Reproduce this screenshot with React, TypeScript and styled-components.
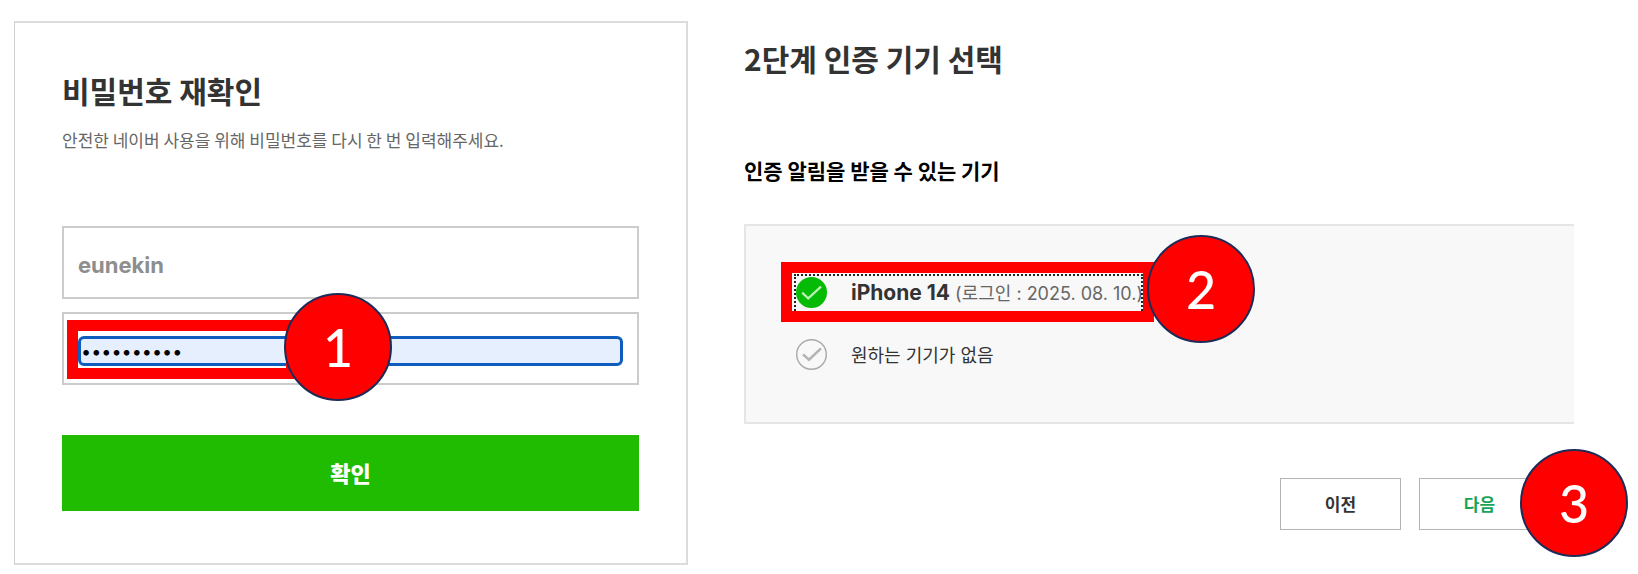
import React, { useState } from "react";
import styled, { createGlobalStyle } from "styled-components";

const GlobalStyle = createGlobalStyle`
  *, *::before, *::after { box-sizing: border-box; }
  body { margin: 0; background: #fff; }
  body, input, button { font-family: Inter, "Noto Sans CJK KR", sans-serif; }
`;

const koreanFirst = `font-family: "Noto Sans CJK KR", Inter, sans-serif;`;

const Page = styled.main`
  display: grid;
  grid-template-columns: minmax(0, 674fr) minmax(0, 830fr);
  align-items: start;
  gap: 56px;
  padding: 21px 64px 7px 14px;
`;

const PasswordCard = styled.form`
  display: flex;
  flex-direction: column;
  padding: 49px 47px 52px;
  border: 2px solid #dcdcdc;
  border-left: 1px solid #d0d0d0;
`;

const DeviceSection = styled.form`
  display: flex;
  flex-direction: column;
  padding-top: 19px;
`;

const Title = styled.h1`
  ${koreanFirst}
  margin: 0;
  font-size: 30px;
  line-height: 36px;
  font-weight: 700;
  color: #333;
`;

const Description = styled.p`
  ${koreanFirst}
  margin: 20px 0 74px;
  font-size: 17px;
  line-height: 24px;
  color: #666;
`;

const Field = styled.div`
  position: relative;
  display: flex;
  align-items: center;
  height: 73px;
  padding: 0 14px;
  border: 2px solid #ccc;

  & + & {
    margin-top: 13px;
  }
`;

const UserInput = styled.input`
  width: 100%;
  padding: 4px 0 0;
  border: 0;
  background: none;
  font-size: 22px;
  line-height: 28px;
  font-weight: 700;
  color: #8e8e8e;
`;

const PasswordInput = styled.input`
  width: 100%;
  height: 30px;
  margin-top: 5px;
  padding: 0;
  border: 3px solid #0f5cbf;
  border-radius: 6px;
  outline: 0;
  background: #e6effd;
  font-size: 18px;
  color: #000;
`;

const ConfirmButton = styled.button`
  height: 76px;
  margin-top: 50px;
  padding: 0 0 2px;
  border: 0;
  background: #1fbc02;
  font-size: 22px;
  font-weight: 800;
  color: #fff;
`;

const SubTitle = styled.h2`
  ${koreanFirst}
  margin: 80px 0 40px;
  font-size: 21px;
  line-height: 28px;
  font-weight: 700;
  color: #000;
`;

const DeviceBox = styled.div`
  display: flex;
  flex-direction: column;
  align-items: flex-start;
  gap: 24px;
  padding: 47px 0 49px 46px;
  border: 2px solid #e5e5e5;
  border-right: 0;
  background: #f8f8f8;
`;

const Option = styled.label<{ $focused?: boolean }>`
  position: relative;
  display: flex;
  align-items: center;
  gap: 24px;
  height: 38px;
  padding: 0 0 0 4px;
  white-space: nowrap;
  font-size: 18px;
  color: #333;

  &::before {
    content: "";
    display: ${(p) => (p.$focused ? "block" : "none")};
    position: absolute;
    inset: 1px 0 0 2px;
    border: 2px dotted #222;
    border-bottom: 0;
  }
`;

const HiddenRadio = styled.input`
  position: absolute;
  opacity: 0;
  width: 31px;
  height: 31px;
  margin: 0;
`;

const DeviceName = styled.span`
  display: flex;
  align-items: baseline;
  gap: 5px;
`;

const Strong = styled.strong`
  font-size: 21px;
  font-weight: 700;
`;

const Muted = styled.span`
  font-size: 18px;
  color: #666;
`;

const Actions = styled.div`
  display: flex;
  justify-content: flex-end;
  gap: 18px;
  margin-top: 54px;
  padding-right: 34px;
`;

const ActionButton = styled.button<{ $primary?: boolean }>`
  position: relative;
  width: 121px;
  height: 52px;
  padding: 0 0 2px;
  border: 1px solid #b4b4b4;
  background: #fff;
  font-size: 17px;
  font-weight: 700;
  color: ${(p) => (p.$primary ? "#17a457" : "#333")};
`;

const Frame = styled.span<{ $inset: string; $width?: string }>`
  position: absolute;
  z-index: 1;
  inset: ${(p) => p.$inset};
  width: ${(p) => p.$width ?? "auto"};
  border: 11px solid #f00;
  pointer-events: none;
`;

const StepBadge = styled.span<{ $top: string; $left: string }>`
  position: absolute;
  z-index: 2;
  top: ${(p) => p.$top};
  left: ${(p) => p.$left};
  display: flex;
  align-items: center;
  justify-content: center;
  width: 108px;
  height: 108px;
  border: 2px solid #1d2b57;
  border-radius: 50%;
  background: #f00;
  font-family: Lato, sans-serif;
  font-size: 52px;
  line-height: 60px;
  font-weight: 500;
  color: #fff;
  pointer-events: none;
`;

function CheckIcon({ checked }: { checked: boolean }) {
  return (
    <svg width="31" height="31" viewBox="0 0 31 31" fill="none" aria-hidden="true">
      <circle
        cx="15.5"
        cy="15.5"
        r="14.8"
        fill={checked ? "#06bb06" : "#f8f8f8"}
        stroke={checked ? "#06bb06" : "#a8a8a8"}
        strokeWidth="1.4"
      />
      <path
        d={checked ? "M6.2 15.6 L12.2 21.4 L25 9.6" : "M7 15.4 L13 20.8 L25 9.4"}
        stroke={checked ? "#b9f0b4" : "#b5b5b5"}
        strokeWidth={checked ? 2.2 : 2.6}
      />
    </svg>
  );
}

export default function App() {
  const [device, setDevice] = useState("iphone");
  const [password, setPassword] = useState("abcdefghij");

  return (
    <>
      <GlobalStyle />
      <Page>
        <PasswordCard onSubmit={(e) => e.preventDefault()}>
          <Title>비밀번호 재확인</Title>
          <Description>안전한 네이버 사용을 위해 비밀번호를 다시 한 번 입력해주세요.</Description>
          <Field>
            <UserInput type="text" aria-label="아이디" value="eunekin" readOnly />
          </Field>
          <Field>
            <PasswordInput
              type="password"
              aria-label="비밀번호"
              value={password}
              onChange={(e) => setPassword(e.target.value)}
            />
            <Frame $inset="6px auto 4px 3px" $width="230px" />
            <StepBadge $top="-21px" $left="220px">1</StepBadge>
          </Field>
          <ConfirmButton type="submit">확인</ConfirmButton>
        </PasswordCard>

        <DeviceSection onSubmit={(e) => e.preventDefault()}>
          <Title as="h2">2단계 인증 기기 선택</Title>
          <SubTitle as="h3">인증 알림을 받을 수 있는 기기</SubTitle>
          <DeviceBox role="radiogroup" aria-label="인증 알림을 받을 수 있는 기기">
            <Option $focused>
              <HiddenRadio
                type="radio"
                name="device"
                checked={device === "iphone"}
                onChange={() => setDevice("iphone")}
              />
              <CheckIcon checked={device === "iphone"} />
              <DeviceName>
                <Strong>iPhone 14</Strong>
                <Muted>(로그인 : 2025. 08. 10.)</Muted>
              </DeviceName>
              <Frame $inset="-11px" />
              <StepBadge $top="-38px" $left="calc(100% + 4px)">2</StepBadge>
            </Option>
            <Option>
              <HiddenRadio
                type="radio"
                name="device"
                checked={device === "none"}
                onChange={() => setDevice("none")}
              />
              <CheckIcon checked={device === "none"} />
              <DeviceName>원하는 기기가 없음</DeviceName>
            </Option>
          </DeviceBox>
          <Actions>
            <ActionButton type="button">이전</ActionButton>
            <ActionButton type="submit" $primary>
              다음
              <StepBadge $top="-30px" $left="100px">3</StepBadge>
            </ActionButton>
          </Actions>
        </DeviceSection>
      </Page>
    </>
  );
}
